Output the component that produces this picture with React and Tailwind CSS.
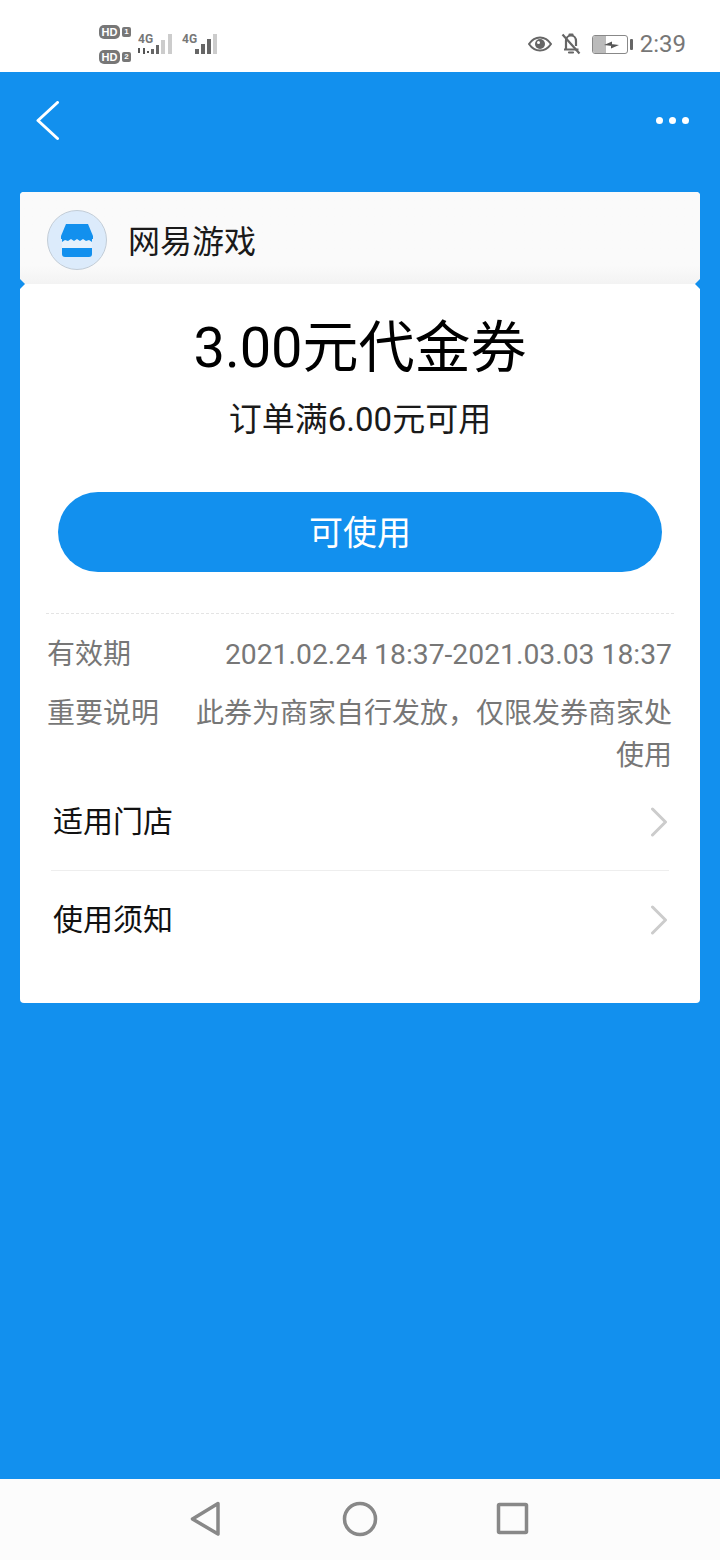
import React from 'react'

const cjk = "font-['Roboto','Noto_Sans_CJK_SC',sans-serif]"

function StatusBar() {
  return (
    <div className="h-[72px] bg-white flex items-center justify-between pt-[16px] pl-[99px] pr-[34px]">
      <div className="flex items-center gap-[6px]">
        <div className="flex flex-col gap-[11px] w-[33px]">
          {[1, 2].map((n) => (
            <div key={n} className="flex items-center gap-[2px]">
              <span className="w-[21px] h-[14px] rounded-[5px] bg-[#777] text-white text-[11px] leading-[14px] font-bold text-center font-['Liberation_Sans',sans-serif]">HD</span>
              <span className="w-[9px] h-[10px] rounded-[2px] bg-[#777] text-white text-[8px] leading-[10px] font-bold text-center font-['Liberation_Sans',sans-serif]">{n}</span>
            </div>
          ))}
        </div>
        <svg width="80" height="26" viewBox="0 0 80 26" fill="none">
          <text x="0" y="12" fontSize="12" fontWeight="700" fill="#777" fontFamily="Roboto, sans-serif">4G</text>
          <path d="M1 22v-5M6 23v-6M9 21h2" stroke="#555" strokeWidth="2" />
          <rect x="13" y="18" width="3" height="5" fill="#666" />
          <rect x="18" y="14" width="3" height="9" fill="#666" />
          <rect x="23" y="9" width="4" height="14" fill="#ccc" />
          <rect x="30" y="3" width="4" height="20" fill="#ccc" />
          <text x="44" y="12" fontSize="12" fontWeight="700" fill="#777" fontFamily="Roboto, sans-serif">4G</text>
          <rect x="57" y="18" width="4" height="5" fill="#666" />
          <rect x="63" y="13" width="4" height="10" fill="#666" />
          <rect x="69" y="8" width="4" height="15" fill="#666" />
          <rect x="75" y="3" width="4" height="20" fill="#ccc" />
        </svg>
      </div>
      <div className="flex items-center">
        <svg width="24" height="16" viewBox="0 0 24 16" fill="none" className="mr-[9px]">
          <path d="M1 8c3-4.500 7-6.500 11-6.500S20 3.500 23 8c-3 4.500-7 6.500-11 6.500S4 12.500 1 8z" stroke="#666" strokeWidth="2" />
          <circle cx="12" cy="8" r="5" fill="#666" />
          <circle cx="10.500" cy="6.500" r="1.500" fill="#fff" />
        </svg>
        <svg width="20" height="24" viewBox="0 0 20 24" fill="none" className="mr-[11px]">
          <path d="M3 17.500h14.500M5 17.500V9c0-3 2-5.500 5-5.500s5 2.500 5 5.500v5" stroke="#666" strokeWidth="2.200" />
          <path d="M8.500 2.500h3M8 20.500h4" stroke="#666" strokeWidth="2.200" strokeLinecap="round" />
          <path d="M1.500 2.500l17 19" stroke="#666" strokeWidth="2.200" />
        </svg>
        <div className="relative w-[36px] h-[19px] rounded-[3px] border border-[#888] overflow-hidden flex mr-[2px]">
          <div className="w-[13px] bg-[#bbb]" />
          <svg width="15" height="8" viewBox="0 0 15 8" className="absolute left-[11px] top-[5px]">
            <path d="M0 4L8 0.500V5zM15 4L7 7.500V3z" fill="#555" />
          </svg>
        </div>
        <div className="w-[3px] h-[11px] rounded-[1px] bg-[#666] mr-[7px]" />
        <span className="text-[24px] leading-[28px] text-[#777] font-['Roboto',sans-serif]">2:39</span>
      </div>
    </div>
  )
}

function Header() {
  return (
    <div className="h-[120px] flex items-start justify-between pt-[29px] pl-[36px] pr-[31px]">
      <svg width="24" height="40" viewBox="0 0 24 40" fill="none">
        <path d="M21.500 1.500L2 19.500l19.500 18" stroke="#fff" strokeWidth="3" strokeLinecap="round" strokeLinejoin="round" />
      </svg>
      <div className="flex gap-[6px] mt-[16px]">
        <span className="w-[7px] h-[7px] rounded-full bg-white" />
        <span className="w-[7px] h-[7px] rounded-full bg-white" />
        <span className="w-[7px] h-[7px] rounded-full bg-white" />
      </div>
    </div>
  )
}

function ShopLogo() {
  return (
    <div className="w-[60px] h-[60px] rounded-full bg-[#dcebfb] border border-[#c2ccd6] flex items-center justify-center">
      <svg width="32" height="33" viewBox="0 0 32 33">
        <path d="M5 0h22l5 12v3H0v-3z" fill="#1290ee" />
        <path d="M1 15h30v15a3 3 0 0 1 -3 3H4a3 3 0 0 1 -3 -3z" fill="#1290ee" />
        <path d="M1 18l3-2 3 1 3-2 3 2 3-2 3 2 3-2 3 2 3-1 3 2v6H1z" fill="#e6f1fc" />
      </svg>
    </div>
  )
}

function Chevron() {
  return (
    <svg width="18" height="30" viewBox="0 0 18 30" fill="none" className="mr-[1px]">
      <path d="M2.500 2L15.500 15 2.500 28" stroke="#ccc" strokeWidth="3" strokeLinecap="round" strokeLinejoin="round" />
    </svg>
  )
}

function Notch({ side }) {
  return side === 'left' ? (
    <span className="absolute left-[-1px] top-[-6px] w-[6px] h-[12px] bg-[#1290ee] [clip-path:polygon(0_0,100%_50%,0_100%)]" />
  ) : (
    <span className="absolute right-[-1px] top-[-6px] w-[6px] h-[12px] bg-[#1290ee] [clip-path:polygon(100%_0,0_50%,100%_100%)]" />
  )
}

function NavBar() {
  return (
    <div className="h-[81px] bg-[#fcfcfc] flex items-center justify-center pb-[2px]">
      <svg width="400" height="40" viewBox="0 0 400 40" fill="none" stroke="#888" strokeWidth="3.500" strokeLinejoin="round">
        <path d="M58 4.500L32.500 20 58 35z" />
        <circle cx="200" cy="20" r="15.500" />
        <rect x="338.500" y="5.500" width="28" height="28" rx="1" />
      </svg>
    </div>
  )
}

export default function App() {
  return (
    <div className={`w-[720px] h-[1560px] bg-[#1290ee] flex flex-col ${cjk}`}>
      <StatusBar />
      <Header />
      <div className="mx-[20px] h-[811px] rounded-[4px] overflow-hidden bg-white flex flex-col">
        <div className="h-[92px] bg-gradient-to-b from-[#fafafa] from-80% to-[#f3f3f3] flex items-center pl-[27px] pt-[4px]">
          <ShopLogo />
          <span className="ml-[21px] mt-[4px] text-[32px] leading-[40px] text-[#1a1a1a]">网易游戏</span>
        </div>
        <div className="relative flex-1 flex flex-col">
          <Notch side="left" />
          <Notch side="right" />
          <div className="text-center text-[56px] leading-[70px] text-black mt-[29px]">3.00元代金券</div>
          <div className="text-center text-[33px] leading-[40px] text-[#1a1a1a] mt-[17px]">订单满6.00元可用</div>
          <button className="mx-[38px] mt-[52px] h-[80px] rounded-full bg-[#1290ee] text-white text-[34px] pt-[3px]">可使用</button>
          <div className="mx-[26px] mt-[41px] border-t border-dashed border-[#e4e4e4]" />
          <div className="flex justify-between items-center ml-[27px] mr-[28px] mt-[20px] text-[28px] leading-[42px] text-[#777]">
            <span>有效期</span>
            <span className="text-[28.3px]">2021.02.24 18:37-2021.03.03 18:37</span>
          </div>
          <div className="flex justify-between ml-[27px] mr-[28px] mt-[17px] text-[28px] leading-[42px] text-[#777]">
            <span className="shrink-0">重要说明</span>
            <span className="w-[476px] text-right">此券为商家自行发放，仅限发券商家处使用</span>
          </div>
          <div className="mx-[31px]">
            <div className="h-[94px] flex items-center justify-between border-b border-[#eee] pl-[2px] pb-[3px]">
              <span className="text-[30px] text-[#111] mb-[2px]">适用门店</span>
              <Chevron />
            </div>
            <div className="h-[97px] flex items-center justify-between pl-[2px]">
              <span className="text-[30px] text-[#111]">使用须知</span>
              <Chevron />
            </div>
          </div>
        </div>
      </div>
      <div className="flex-1" />
      <NavBar />
    </div>
  )
}
